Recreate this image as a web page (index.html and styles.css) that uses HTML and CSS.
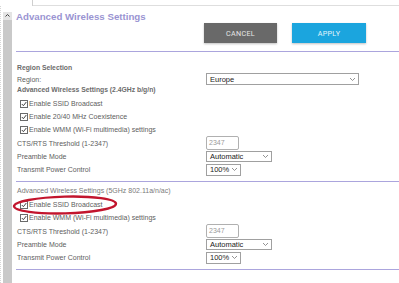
FILE: index.html
```html
<!DOCTYPE html>
<html lang="en">
<head>
  <meta charset="UTF-8">
  <meta name="viewport" content="width=device-width,initial-scale=1.0">
  <title>Advanced Wireless Settings</title>
  <link rel="stylesheet" href="styles.css">
</head>
<body>

  <!-- Верхняя полоска окна -->
  <div class="topbar">
    <div class="topbar-tab"><span>Pass</span></div>
    <div class="topbar-rest"></div>
  </div>

  <div class="frame">
    <div class="page-edge"></div>
    <div class="scrollbar">
      <div class="scroll-up">
        <svg width="9" height="7" viewBox="0 0 9 7"><polyline points="2.5,4.5 4.5,2.5 6.5,4.5" fill="none" stroke="#444" stroke-width="1"/></svg>
      </div>
    </div>

    <main class="settings">
      <header class="settings-header">
        <h1 class="settings-title">Advanced Wireless Settings</h1>
        <div class="actions">
          <button class="btn btn-cancel">CANCEL</button>
          <button class="btn btn-apply">APPLY</button>
        </div>
      </header>

      <!-- 2.4 GHz -->
      <section class="block block-first">
        <div class="row row-tight"><span class="label heading">Region Selection</span></div>
        <div class="row row-tight">
          <span class="label">Region:</span>
          <div class="select select-wide"><span>Europe</span>
            <svg width="7" height="5" viewBox="0 0 7 5"><polyline points="1,1 3.5,3.5 6,1" fill="none" stroke="#777" stroke-width="0.8"/></svg>
          </div>
        </div>
        <div class="row row-tight"><span class="label heading">Advanced Wireless Settings (2.4GHz b/g/n)</span></div>
        <div class="checks">
          <label class="check-row"><span class="check"><svg width="6" height="6" viewBox="0 0 6 6"><polyline points="0.8,3 2.4,4.7 5.3,1" fill="none" stroke="#444" stroke-width="1"/></svg></span>Enable SSID Broadcast</label>
          <label class="check-row"><span class="check"><svg width="6" height="6" viewBox="0 0 6 6"><polyline points="0.8,3 2.4,4.7 5.3,1" fill="none" stroke="#444" stroke-width="1"/></svg></span>Enable 20/40 MHz Coexistence</label>
          <label class="check-row"><span class="check"><svg width="6" height="6" viewBox="0 0 6 6"><polyline points="0.8,3 2.4,4.7 5.3,1" fill="none" stroke="#444" stroke-width="1"/></svg></span>Enable WMM (Wi-Fi multimedia) settings</label>
        </div>
        <div class="row row-cts">
          <span class="label">CTS/RTS Threshold (1-2347)</span>
          <div class="text-input">2347</div>
        </div>
        <div class="row">
          <span class="label">Preamble Mode</span>
          <div class="select select-mode"><span>Automatic</span>
            <svg width="7" height="5" viewBox="0 0 7 5"><polyline points="1,1 3.5,3.5 6,1" fill="none" stroke="#777" stroke-width="0.8"/></svg>
          </div>
        </div>
        <div class="row">
          <span class="label">Transmit Power Control</span>
          <div class="select select-power"><span>100%</span>
            <svg width="7" height="5" viewBox="0 0 7 5"><polyline points="1,1 3.5,3.5 6,1" fill="none" stroke="#777" stroke-width="0.8"/></svg>
          </div>
        </div>
      </section>

      <!-- 5 GHz -->
      <section class="block block-second">
        <div class="row row-tight"><span class="label heading-light">Advanced Wireless Settings (5GHz 802.11a/n/ac)</span></div>
        <div class="checks">
          <label class="check-row"><span class="check"><svg width="6" height="6" viewBox="0 0 6 6"><polyline points="0.8,3 2.4,4.7 5.3,1" fill="none" stroke="#444" stroke-width="1"/></svg></span>Enable SSID Broadcast</label>
          <label class="check-row"><span class="check"><svg width="6" height="6" viewBox="0 0 6 6"><polyline points="0.8,3 2.4,4.7 5.3,1" fill="none" stroke="#444" stroke-width="1"/></svg></span>Enable WMM (Wi-Fi multimedia) settings</label>
        </div>
        <div class="row row-cts">
          <span class="label">CTS/RTS Threshold (1-2347)</span>
          <div class="text-input">2347</div>
        </div>
        <div class="row">
          <span class="label">Preamble Mode</span>
          <div class="select select-mode"><span>Automatic</span>
            <svg width="7" height="5" viewBox="0 0 7 5"><polyline points="1,1 3.5,3.5 6,1" fill="none" stroke="#777" stroke-width="0.8"/></svg>
          </div>
        </div>
        <div class="row">
          <span class="label">Transmit Power Control</span>
          <div class="select select-power"><span>100%</span>
            <svg width="7" height="5" viewBox="0 0 7 5"><polyline points="1,1 3.5,3.5 6,1" fill="none" stroke="#777" stroke-width="0.8"/></svg>
          </div>
        </div>

        <!-- Красная пометка поверх -->
        <svg class="mark" width="108" height="22" viewBox="0 0 108 22">
          <ellipse cx="54" cy="11" rx="51" ry="8.4" fill="none" stroke="#c2152d" stroke-width="2.4" transform="rotate(-1.5 54 11)"/>
        </svg>
      </section>
    </main>
  </div>

</body>
</html>
```

FILE: styles.css
```css
/* Сброс */
* { margin:0; padding:0; box-sizing:border-box; }
body {
  background:#fff; font-family:'Liberation Sans',Arial,sans-serif;
  width:399px; height:283px; overflow:hidden;
}

/* Верхняя полоска */
.topbar { display:flex; height:6px; }
.topbar-tab {
  width:33px; border-right:1px solid #cfcfcf; overflow:hidden;
  font-size:8px; color:#888; padding-left:3px;
}
.topbar-tab span { display:block; margin-top:-7px; }
.topbar-rest { flex:1; border-bottom:1px solid #dedede; }

/* Рамка со скроллбаром */
.frame { display:flex; height:277px; }
.page-edge { width:3px; border-left:1px dotted #d6d6d6; }
.scrollbar {
  width:9px; margin-top:6px; background:#c9c9c9;
  display:flex; flex-direction:column;
}
.scroll-up { height:8px; background:#e4e4e4; display:flex; }

/* Основная панель */
.settings { flex:1; margin-left:4px; }
.settings-header {
  height:46px; padding-top:6px;
  border-bottom:1px solid #aba5dd;
}
.settings-title {
  font-size:9.7px; line-height:10px; font-weight:bold;
  color:#9a94d2;
}
.actions { display:flex; gap:15px; margin-top:1px; padding-left:188px; }
.btn {
  width:73px; height:20px; border:none;
  font-family:Roboto,sans-serif; font-size:7.2px; letter-spacing:.3px;
  box-shadow:0 1px 2px rgba(0,0,0,.25);
}
.btn-cancel { background:#696969; color:#e6e6e6; }
.btn-apply { background:#1ba5de; color:#e4f5fc; width:74px; }

/* Блоки настроек */
.block { border-bottom:1px solid #aba5dd; padding-bottom:5px; }
.block-first { padding-top:10px; }
.block-second { padding-top:3px; position:relative; }

.row {
  display:grid; grid-template-columns:189px auto;
  align-items:center; justify-items:start;
  height:13px; padding-left:1px;
}
.row-tight { height:11px; }
.row-cts { height:14px; }

.label { font-size:7px; color:#606060; white-space:nowrap; }
.heading { font-weight:bold; color:#6c6c6c; font-size:6.8px; }
.heading-light { color:#7a7a7a; }

/* Чекбоксы */
.checks { margin-top:2px; }
.check-row {
  display:flex; align-items:center; gap:1px;
  height:13px; padding-left:4px;
  font-size:7px; color:#606060; white-space:nowrap;
}
.check {
  width:8px; height:8px; border:1px solid #6a6a6a; background:#fff;
  display:flex; align-items:center; justify-content:center;
}

/* Поля */
.text-input {
  width:33px; height:14px; border:1px solid #b0b0b0; border-radius:2px;
  font-size:7px; color:#9a9a9a; padding-left:2px; line-height:12px;
}
.select {
  display:flex; align-items:center; justify-content:space-between;
  height:11px; border:1px solid #a0a0a0; background:#fff;
  padding:0 2px 0 3px; font-size:7.5px; color:#222;
}
.select-wide { width:153px; height:12px; }
.select-mode { width:66px; }
.select-power { width:35px; height:12px; }

/* Пометка */
.mark { position:absolute; left:-5px; top:12px; }
```
